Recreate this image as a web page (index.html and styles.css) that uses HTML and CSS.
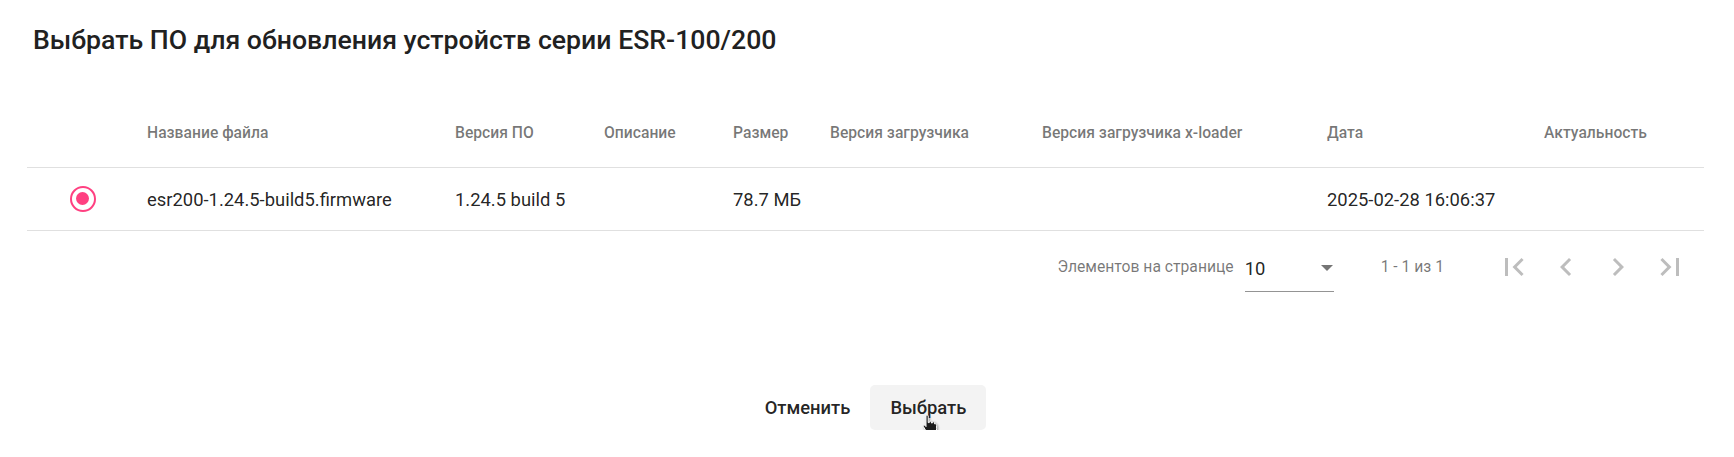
FILE: index.html
```html
<!DOCTYPE html>
<html lang="ru">
<head>
    <meta charset="UTF-8">
    <title>Выбрать ПО</title>
    <link rel="stylesheet" href="styles.css">
</head>
<body>

    <div class="dialog">
        <h2 class="dialog-title">Выбрать ПО для обновления устройств серии ESR-100/200</h2>

        <table class="fw-table">
            <colgroup>
                <col class="c-radio">
                <col class="c-name">
                <col class="c-ver">
                <col class="c-desc">
                <col class="c-size">
                <col class="c-boot">
                <col class="c-xload">
                <col class="c-date">
                <col class="c-actual">
            </colgroup>
            <thead>
                <tr>
                    <th></th>
                    <th>Название файла</th>
                    <th>Версия ПО</th>
                    <th>Описание</th>
                    <th>Размер</th>
                    <th>Версия загрузчика</th>
                    <th>Версия загрузчика x-loader</th>
                    <th>Дата</th>
                    <th>Актуальность</th>
                </tr>
            </thead>
            <tbody>
                <tr>
                    <td><span class="radio checked"><span class="radio-dot"></span></span></td>
                    <td>esr200-1.24.5-build5.firmware</td>
                    <td>1.24.5 build 5</td>
                    <td></td>
                    <td>78.7 МБ</td>
                    <td></td>
                    <td></td>
                    <td>2025-02-28 16:06:37</td>
                    <td></td>
                </tr>
            </tbody>
        </table>

        <div class="paginator">
            <span class="page-size-label">Элементов на странице</span>
            <div class="page-size-select">
                <span class="select-value">10</span>
                <span class="select-arrow"></span>
            </div>
            <span class="range-label">1 - 1 из 1</span>
            <div class="page-nav">
                <button class="nav-btn" disabled>
                    <svg viewBox="0 0 24 24"><path d="M18.41 16.59L13.82 12l4.59-4.59L17 6l-6 6 6 6zM6 6h2v12H6z"/></svg>
                </button>
                <button class="nav-btn" disabled>
                    <svg viewBox="0 0 24 24"><path d="M15.41 7.41L14 6l-6 6 6 6 1.41-1.41L10.83 12z"/></svg>
                </button>
                <button class="nav-btn" disabled>
                    <svg viewBox="0 0 24 24"><path d="M10 6L8.59 7.41 13.17 12l-4.58 4.59L10 18l6-6z"/></svg>
                </button>
                <button class="nav-btn" disabled>
                    <svg viewBox="0 0 24 24"><path d="M5.59 7.41L10.18 12l-4.59 4.59L7 18l6-6-6-6zM16 6h2v12h-2z"/></svg>
                </button>
            </div>
        </div>

        <div class="dialog-actions">
            <button class="btn">Отменить</button>
            <button class="btn btn-hover">
                Выбрать
                <svg class="cursor" viewBox="0 0 18 21">
                    <path d="M4 2C4 0.8 6.2 0.8 6.2 2V8.6H7.3V7.9C7.3 6.9 9.4 6.9 9.4 7.9V9H10.4V8.6C10.4 7.6 12.5 7.6 12.5 8.6V9.8H13.4C14.3 9.8 14.6 10.6 14.6 11.4V14.8C14.6 17.6 13 19.6 10.3 19.6H8C6 19.6 5 18.6 4 17L1.4 12.6C0.9 11.6 2.2 10.6 3 11.4L4 12.6Z"/>
                </svg>
            </button>
        </div>
    </div>

</body>
</html>
```

FILE: styles.css
```css
body {
    margin: 0;
    background: #ffffff;
    font-family: Roboto, "Noto Sans", Arial, sans-serif;
    color: rgba(0, 0, 0, 0.87);
}
.dialog {
    padding: 0 30px 0 27px;
}
.dialog-title {
    margin: 24px 0 0 6px;
    font-size: 26.67px;
    line-height: 32px;
    font-weight: 500;
    color: #212121;
}
.fw-table {
    width: 100%;
    margin-top: 45px;
    border-collapse: collapse;
    table-layout: fixed;
}
.c-radio { width: 120px; }
.c-name { width: 308px; }
.c-ver { width: 149px; }
.c-desc { width: 129px; }
.c-size { width: 97px; }
.c-boot { width: 212px; }
.c-xload { width: 285px; }
.c-date { width: 217px; }
.fw-table th {
    height: 62px;
    padding: 0 0 4px 0;
    text-align: left;
    font-size: 15.7px;
    font-weight: 500;
    color: rgba(0, 0, 0, 0.54);
    border-bottom: 1px solid #e0e0e0;
    white-space: nowrap;
}
.fw-table td {
    height: 62px;
    padding: 0;
    font-size: 18.4px;
    border-bottom: 1px solid #e0e0e0;
    white-space: nowrap;
}
.radio {
    display: block;
    box-sizing: border-box;
    width: 26px;
    height: 26px;
    margin-left: 43px;
    border: 2.6px solid #ff4081;
    border-radius: 50%;
    position: relative;
}
.radio-dot {
    position: absolute;
    left: 3.9px;
    top: 3.9px;
    width: 13px;
    height: 13px;
    border-radius: 50%;
    background: #ff4081;
}
.paginator {
    display: flex;
    align-items: center;
    justify-content: flex-end;
    height: 71px;
    padding-right: 8px;
    font-size: 15.7px;
    color: rgba(0, 0, 0, 0.54);
}
.page-size-select {
    display: flex;
    align-items: center;
    justify-content: space-between;
    width: 89px;
    height: 46px;
    margin-left: 11px;
    margin-top: 4px;
    border-bottom: 1px solid rgba(0, 0, 0, 0.42);
    box-sizing: border-box;
}
.select-value {
    font-size: 18.4px;
    color: rgba(0, 0, 0, 0.87);
}
.select-arrow {
    width: 0;
    height: 0;
    margin-right: 1px;
    border-left: 6.5px solid transparent;
    border-right: 6.5px solid transparent;
    border-top: 6.5px solid rgba(0, 0, 0, 0.54);
}
.range-label {
    margin-left: 47px;
}
.page-nav {
    display: flex;
    margin-left: 44px;
}
.nav-btn {
    display: flex;
    align-items: center;
    justify-content: center;
    width: 52px;
    height: 48px;
    padding: 0;
    border: none;
    background: none;
}
.nav-btn svg {
    width: 36px;
    height: 36px;
    fill: rgba(0, 0, 0, 0.26);
}
.dialog-actions {
    display: flex;
    justify-content: center;
    margin-top: 83px;
}
.btn {
    position: relative;
    height: 45px;
    padding: 0 20px;
    border: none;
    border-radius: 5px;
    background: none;
    font-family: Roboto, "Noto Sans", Arial, sans-serif;
    font-size: 18.4px;
    font-weight: 500;
    color: rgba(0, 0, 0, 0.87);
}
.btn-hover {
    background: #f3f3f3;
}
.cursor {
    position: absolute;
    left: 52px;
    top: 29px;
    width: 18px;
    height: 21px;
    fill: #1a1a1a;
    stroke: #ffffff;
    stroke-width: 1;
    filter: drop-shadow(1px 1px 1px rgba(0, 0, 0, 0.4));
}
```
